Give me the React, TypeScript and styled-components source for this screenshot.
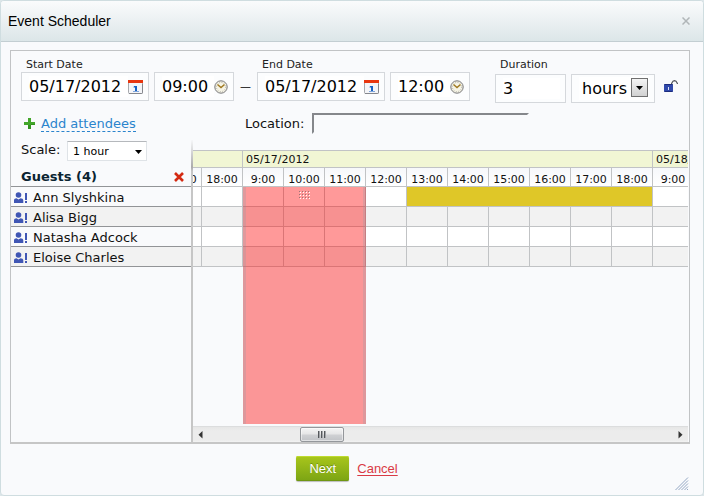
import React from "react";
import styled, { createGlobalStyle, css } from "styled-components";

const GlobalStyle = createGlobalStyle`
  *, *::before, *::after { box-sizing: border-box; }
  body {
    margin: 0;
    background: #dde6e9;
    font-family: "DejaVu Sans", Verdana, sans-serif;
    font-size: 13px;
    color: #111;
  }
  button, input, select { font-family: inherit; color: inherit; margin: 0; padding: 0; }
  button { background: none; border: 0; cursor: pointer; }
  svg { display: block; flex: none; }
`;

const LINE = "#c1c3c5";
const SURFACE = "#f9fafc";

const Dialog = styled.section`
  min-height: 100vh;
  display: flex;
  flex-direction: column;
  position: relative;
  background: ${SURFACE};
  border: 1px solid #cfdde0;
  border-radius: 4px;
  overflow: hidden;
`;

const TitleBar = styled.header`
  display: flex;
  align-items: center;
  justify-content: space-between;
  height: 41px;
  padding: 0 13px 0 7px;
  background: linear-gradient(#fafbfc, #dce6e8);
  border-bottom: 1px solid #c3ced2;
`;

const Title = styled.h1`
  margin: 0;
  font: 14px/18px "Liberation Sans", Arial, sans-serif;
  color: #000;
`;

const CloseButton = styled.button`
  color: #b0b6b8;
`;

const Panel = styled.main`
  flex: 1;
  display: flex;
  flex-direction: column;
  margin: 8px 13px 0 9px;
  border: 1px solid ${LINE};
  border-bottom: 2px solid #c6c6c6;
`;

const FieldRow = styled.div`
  display: flex;
  align-items: flex-start;
  padding: 7px 10px 0;
`;

const FieldGroup = styled.div<{ $spaced?: boolean }>`
  display: flex;
  flex-direction: column;
  gap: ${(p) => (p.$spaced ? 3 : 1)}px;
  margin-left: ${(p) => (p.$spaced ? 25 : 0)}px;
`;

const FieldLabel = styled.label`
  padding-left: 5px;
  font-size: 11px;
  line-height: 13px;
  color: #222;
`;

const Controls = styled.div`
  display: flex;
  gap: 5px;
`;

const fieldWidths = { date: 128, time: 80, count: 71, unit: 84 };

const FieldBox = styled.div<{ $kind: keyof typeof fieldWidths }>`
  position: relative;
  display: flex;
  align-items: center;
  justify-content: space-between;
  width: ${(p) => fieldWidths[p.$kind]}px;
  height: 29px;
  padding: 0 5px 0 7px;
  border: 1px solid #d5d8dc;
  background: #fcfdfe;
`;

const FieldInput = styled.input`
  flex: 1;
  min-width: 0;
  height: 21px;
  border: 0;
  outline: 0;
  background: #fff;
  font-size: 16px;
  color: #000;
`;

const UnitSelect = styled.select`
  flex: 1;
  height: 23px;
  padding-left: 3px;
  border: 0;
  outline: 0;
  appearance: none;
  background: #fff;
  font-size: 16px;
  color: #000;
`;

const UnitArrow = styled.span`
  position: absolute;
  right: 6px;
  top: 3px;
  display: grid;
  place-items: center;
  width: 17px;
  height: 19px;
  border: 1px solid #707070;
  background: linear-gradient(#f4f4f4, #d2d2d2);
  pointer-events: none;
`;

const Dash = styled.span`
  width: 23px;
  margin-top: 14px;
  line-height: 29px;
  text-align: center;
  font-size: 11px;
  color: #000;
`;

const LockButton = styled.button`
  margin: 22px 0 0 9px;
`;

const DetailsRow = styled.div`
  display: flex;
  align-items: center;
  height: 21px;
  margin-top: 10px;
  padding-left: 13px;
`;

const AddAttendees = styled.div`
  display: flex;
  align-items: center;
  gap: 6px;
  width: 221px;
`;

const AddLink = styled.a`
  line-height: 15px;
  color: #2b84cd;
  text-decoration: none;
  border-bottom: 1px dashed #2b84cd;
`;

const LocationLabel = styled.label`
  width: 67px;
  line-height: 21px;
`;

const LocationInput = styled.input`
  width: 217px;
  height: 21px;
  border: 2px solid transparent;
  border-top-color: #85878b;
  border-left-color: #85878b;
  outline: 0;
  background: transparent;
`;

const Scheduler = styled.div`
  flex: 1;
  display: flex;
  margin-top: 6px;
`;

const GuestColumn = styled.aside`
  flex: 0 0 182px;
  padding-top: 1px;
  border-right: 2px solid;
  border-image: linear-gradient(${SURFACE}, #aaa 28px, #c6c6c6 32px) 1;
`;

const ScaleRow = styled.div`
  display: flex;
  align-items: center;
  padding-left: 10px;
`;

const ScaleLabel = styled.label`
  flex: 0 0 46px;
  line-height: 16px;
  padding-bottom: 2px;
`;

const ScaleBox = styled.span`
  position: relative;
  display: block;
  width: 80px;
`;

const ScaleSelect = styled.select`
  display: block;
  width: 100%;
  height: 20px;
  padding-left: 5px;
  border: 1px solid #dfe3e7;
  border-top-color: #b5b8bc;
  outline: 0;
  appearance: none;
  background: #fff;
  font-size: 11px;
  color: #000;
`;

const ScaleArrow = styled.span`
  position: absolute;
  right: 5px;
  top: 9px;
  pointer-events: none;
`;

const GuestHeader = styled.div`
  display: flex;
  align-items: center;
  justify-content: space-between;
  height: 26px;
  padding: 6px 7px 0 10px;
  border-bottom: 1px solid #929497;
`;

const GuestTitle = styled.h2`
  margin: 0;
  font-size: 13px;
  line-height: 18px;
  color: #0b2432;
`;

const GuestList = styled.ul`
  list-style: none;
  margin: 0;
  padding: 0;
`;

const GuestItem = styled.li`
  display: flex;
  align-items: center;
  gap: 5px;
  height: 20px;
  padding: 2px 0 0 3px;
  border-bottom: 1px solid #929497;
  &:nth-child(even) { background: #f2f2f2; }
`;

const TimelineColumn = styled.div`
  flex: 1;
  min-width: 0;
  display: flex;
  flex-direction: column;
  margin: 10px 1px 0 0;
`;

const Timeline = styled.div`
  flex: 1;
  position: relative;
  overflow: hidden;
`;

const TimeTable = styled.table`
  table-layout: fixed;
  width: 533px;
  margin-left: -32px;
  border-collapse: separate;
  border-spacing: 0;
  font-size: 11px;
`;

const cell = css`
  padding: 0;
  border-right: 1px solid ${LINE};
  border-bottom: 1px solid ${LINE};
  white-space: nowrap;
`;

const DayCell = styled.th`
  ${cell}
  height: 18px;
  padding-left: 3px;
  border-top: 1px solid ${LINE};
  background: #f1f6d4;
  font-weight: normal;
  text-align: left;
`;

const HourCell = styled.th`
  ${cell}
  height: 19px;
  padding-top: 5px;
  line-height: 13px;
  background: linear-gradient(#f6f8fb, #fff);
  font-weight: normal;
  text-align: center;
`;

const SlotRow = styled.tr`
  background: #fff;
  &:nth-child(even) { background: #f2f2f2; }
`;

const Slot = styled.td<{ $busy?: boolean }>`
  ${cell}
  height: 20px;
  ${(p) => p.$busy && css`background: #dfc728;`}
`;

const Selection = styled.div`
  position: absolute;
  top: 37px;
  bottom: 2px;
  left: 50px;
  width: 123px;
  display: flex;
  justify-content: center;
  padding-top: 4px;
  background: rgba(255, 0, 0, 0.4) padding-box;
  border: solid rgba(200, 70, 75, 0.55);
  border-width: 0 3px;
`;

const ScrollBar = styled.div`
  display: flex;
  align-items: center;
  height: 16px;
  padding: 0 5px;
  border-top: 1px solid #dcddde;
  background: linear-gradient(#e6e6e6, #ececec 4px, #ececec 13px, #f3f3f3);
`;

const ScrollTrack = styled.div`
  flex: 1;
  display: flex;
  padding-left: 97px;
`;

const ScrollThumb = styled.div`
  display: grid;
  place-items: center;
  width: 44px;
  height: 15px;
  border: 1px solid #94979b;
  border-radius: 2px;
  background: linear-gradient(#f5f5f5, #e6e6e7 45%, #cfd0d3 55%, #c1c3c7);
  box-shadow: inset 0 0 0 1px rgba(255, 255, 255, 0.5);
`;

const Footer = styled.footer`
  display: flex;
  align-items: flex-start;
  justify-content: center;
  gap: 8px;
  padding: 12px 10px 14px 0;
  font-family: "Liberation Sans", Arial, sans-serif;
  font-size: 13px;
`;

const NextButton = styled.button`
  width: 53px;
  height: 25px;
  border-radius: 2px;
  background: linear-gradient(#a9c61c, #7ba414);
  box-shadow: inset 0 1px #bfdb2f, inset 0 -1px #6f9612, 0 1px 1px rgba(0, 0, 0, 0.25);
  color: #fff;
  font-size: 13px;
  text-shadow: 0 -1px rgba(70, 100, 0, 0.5);
`;

const CancelLink = styled.a`
  line-height: 25px;
  color: #d93a45;
  text-decoration: underline;
  text-underline-offset: 2px;
`;

const ResizeGrip = styled.span`
  position: absolute;
  right: 14px;
  bottom: 4px;
`;

const CalendarIcon = () => (
  <svg width="15" height="16" viewBox="0 0 15 16">
    <rect x="0.5" y="1.5" width="14" height="13" rx="1" fill="#f4f5f8" stroke="#a7a9ad" />
    <rect x="0" y="1" width="15" height="3" fill="#e8360f" />
    <path d="M1 14.500h12.500a1 1 0 0 0 1-1V5" fill="none" stroke="#85878d" />
    <path d="M6 7h3v5H7V8.500H5.500z" fill="#1762c4" />
    <path d="M5 12.500h6" stroke="#7ea5dc" />
  </svg>
);

const ClockIcon = () => (
  <svg width="14" height="14" viewBox="0 0 14 14">
    <circle cx="7" cy="7" r="6.200" fill="#f6f4e6" stroke="#77777a" />
    <circle cx="7" cy="7" r="4.600" fill="none" stroke="#b5b4aa" strokeWidth="1" strokeDasharray="1 1.400" />
    <path d="M3.500 4.500 7 7.500 10.500 4.500" fill="none" stroke="#a07a22" strokeWidth="1.500" />
  </svg>
);

const LockIcon = () => (
  <svg width="14" height="13" viewBox="0 0 14 13">
    <path d="M7.600 5V3.500L9 1.200 10.500 0.600 12 1.200 13.400 3.500V4" fill="none" stroke="#55585f" strokeWidth="1.200" />
    <rect x="0" y="4" width="9" height="8" rx="1" fill="#3049ab" />
    <path d="M0.500 4.500h8M0.500 11.500h8" stroke="#1d2c7c" />
    <path d="M4.500 7v3" stroke="#dbe1f7" />
  </svg>
);

const PlusIcon = () => (
  <svg width="11" height="11" viewBox="0 0 11 11">
    <path d="M4 0h3v4h4v3H7v4H4V7H0V4h4z" fill="#43a62a" />
    <path d="M4 7h3v4H4zM7 6h4v1H7z" fill="#33921f" />
  </svg>
);

const GuestIcon = () => (
  <svg width="14" height="12" viewBox="0 0 14 12">
    <circle cx="4.500" cy="3" r="2.800" fill="#4056b4" />
    <path d="M0 11V8.500C0 7 1 6.300 2.500 6.300l2 1.200 2-1.200C8 6.300 9.300 7 9.300 8.500V11z" fill="#4056b4" />
    <path d="M11 1h2v7h-2zM11 9h2v2h-2z" fill="#4056b4" />
  </svg>
);

const RemoveIcon = () => (
  <svg width="10" height="10" viewBox="0 0 10 10">
    <path d="M1 1 9 9M9 1 1 9" stroke="#d42a12" strokeWidth="2.600" />
  </svg>
);

const CloseIcon = () => (
  <svg width="8" height="8" viewBox="0 0 8 8">
    <path d="M0.500 0.500 7.500 7.500M7.500 0.500 0.500 7.500" stroke="currentColor" strokeWidth="1.500" />
  </svg>
);

const DownArrow = () => (
  <svg width="7" height="4" viewBox="0 0 7 4">
    <path d="M0 0h7L3.500 4z" fill="#000" />
  </svg>
);

const SideArrow = ({ left }: { left?: boolean }) => (
  <svg width="5" height="8" viewBox="0 0 5 8">
    <path d={left ? "M4.500 0v7.500L0.500 3.800z" : "M0.500 0v7.500l4-3.700z"} fill="#333" />
  </svg>
);

const DragDots = () => (
  <svg width="12" height="9" viewBox="0 0 12 9">
    {[0, 3, 6].map((y) =>
      [0, 3, 6, 9].map((x) => (
        <g key={`${x}-${y}`}>
          <rect x={x} y={y} width="1" height="1" fill="#9c7474" />
          <rect x={x + 1} y={y + 1} width="1" height="1" fill="#fff" />
        </g>
      ))
    )}
  </svg>
);

const ThumbGrip = () => (
  <svg width="8" height="7" viewBox="0 0 8 7">
    <path d="M0.500 0v7M3.500 0v7M6.500 0v7" stroke="#55585c" />
    <path d="M1.500 0v7M4.500 0v7M7.500 0v7" stroke="#a4a6aa" />
  </svg>
);

const GripLines = () => (
  <svg width="14" height="14" viewBox="0 0 14 14">
    <path d="M0.500 13 13 0.500M3.500 13 13 3.500M6.500 13 13 6.500M9.500 13 13 9.500M12 13l1-1" stroke="#93a6c3" />
  </svg>
);

const guests = [
  { name: "Ann Slyshkina", busy: true },
  { name: "Alisa Bigg" },
  { name: "Natasha Adcock" },
  { name: "Eloise Charles" },
];

const hours = [
  "17:00", "18:00", "9:00", "10:00", "11:00", "12:00", "13:00",
  "14:00", "15:00", "16:00", "17:00", "18:00", "9:00",
];

const slots = (count: number, prefix: string) =>
  Array.from({ length: count }, (_, i) => <Slot key={`${prefix}${i}`} />);

const DateTimeField = ({ id, label, date, time }: { id: string; label: string; date: string; time: string }) => (
  <FieldGroup>
    <FieldLabel htmlFor={id}>{label}</FieldLabel>
    <Controls>
      <FieldBox $kind="date">
        <FieldInput id={id} defaultValue={date} />
        <button type="button" aria-label={`Choose ${label}`}><CalendarIcon /></button>
      </FieldBox>
      <FieldBox $kind="time">
        <FieldInput aria-label={`${label} time`} defaultValue={time} />
        <button type="button" aria-label={`Choose ${label} time`}><ClockIcon /></button>
      </FieldBox>
    </Controls>
  </FieldGroup>
);

export default function App() {
  return (
    <>
      <GlobalStyle />
      <Dialog role="dialog" aria-labelledby="dialog-title">
        <TitleBar>
          <Title id="dialog-title">Event Scheduler</Title>
          <CloseButton type="button" aria-label="Close"><CloseIcon /></CloseButton>
        </TitleBar>

        <Panel>
          <FieldRow>
            <DateTimeField id="start" label="Start Date" date="05/17/2012" time="09:00" />
            <Dash>—</Dash>
            <DateTimeField id="end" label="End Date" date="05/17/2012" time="12:00" />
            <FieldGroup $spaced>
              <FieldLabel htmlFor="duration">Duration</FieldLabel>
              <Controls>
                <FieldBox $kind="count">
                  <FieldInput id="duration" defaultValue="3" />
                </FieldBox>
                <FieldBox $kind="unit">
                  <UnitSelect aria-label="Duration unit" defaultValue="hours">
                    <option>hours</option>
                    <option>days</option>
                  </UnitSelect>
                  <UnitArrow><DownArrow /></UnitArrow>
                </FieldBox>
              </Controls>
            </FieldGroup>
            <LockButton type="button" aria-label="Lock duration"><LockIcon /></LockButton>
          </FieldRow>

          <DetailsRow>
            <AddAttendees>
              <PlusIcon />
              <AddLink href="#attendees">Add attendees</AddLink>
            </AddAttendees>
            <LocationLabel htmlFor="location">Location:</LocationLabel>
            <LocationInput id="location" />
          </DetailsRow>

          <Scheduler>
            <GuestColumn>
              <ScaleRow>
                <ScaleLabel htmlFor="scale">Scale:</ScaleLabel>
                <ScaleBox>
                  <ScaleSelect id="scale" defaultValue="1 hour">
                    <option>1 hour</option>
                    <option>1 day</option>
                  </ScaleSelect>
                  <ScaleArrow><DownArrow /></ScaleArrow>
                </ScaleBox>
              </ScaleRow>
              <GuestHeader>
                <GuestTitle>Guests ({guests.length})</GuestTitle>
                <button type="button" aria-label="Remove guests"><RemoveIcon /></button>
              </GuestHeader>
              <GuestList>
                {guests.map((g) => (
                  <GuestItem key={g.name}><GuestIcon />{g.name}</GuestItem>
                ))}
              </GuestList>
            </GuestColumn>

            <TimelineColumn>
              <Timeline>
                <TimeTable>
                  <thead>
                    <tr>
                      <DayCell colSpan={2} />
                      <DayCell colSpan={10}>05/17/2012</DayCell>
                      <DayCell>05/18/2012</DayCell>
                    </tr>
                    <tr>
                      {hours.map((h, i) => <HourCell key={i}>{h}</HourCell>)}
                    </tr>
                  </thead>
                  <tbody>
                    {guests.map((g) => (
                      <SlotRow key={g.name}>
                        {slots(6, "a")}
                        {g.busy ? <Slot $busy colSpan={6} aria-label="Busy" /> : slots(6, "b")}
                        {slots(1, "c")}
                      </SlotRow>
                    ))}
                  </tbody>
                </TimeTable>
                <Selection><DragDots /></Selection>
              </Timeline>
              <ScrollBar>
                <button type="button" aria-label="Scroll left"><SideArrow left /></button>
                <ScrollTrack>
                  <ScrollThumb><ThumbGrip /></ScrollThumb>
                </ScrollTrack>
                <button type="button" aria-label="Scroll right"><SideArrow /></button>
              </ScrollBar>
            </TimelineColumn>
          </Scheduler>
        </Panel>

        <Footer>
          <NextButton type="button">Next</NextButton>
          <CancelLink href="#cancel">Cancel</CancelLink>
        </Footer>
        <ResizeGrip><GripLines /></ResizeGrip>
      </Dialog>
    </>
  );
}
